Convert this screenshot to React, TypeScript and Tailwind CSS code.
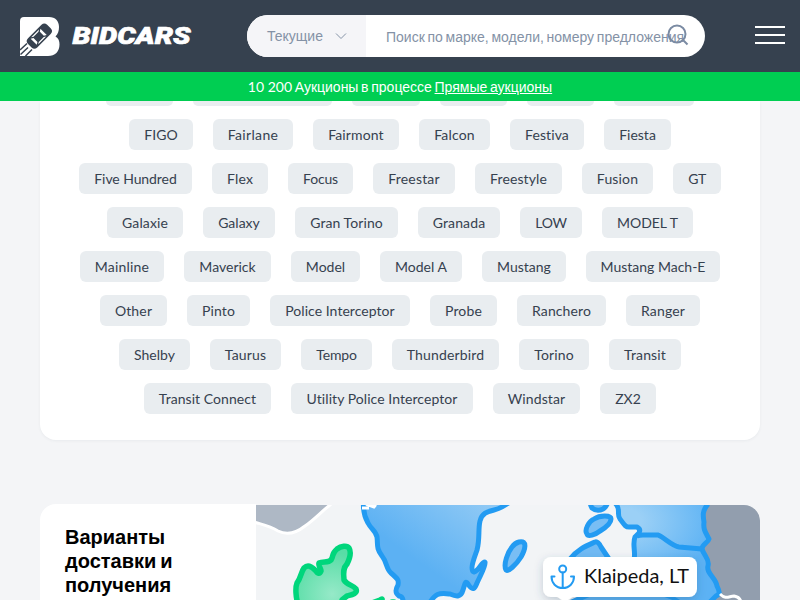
import React from "react";

// name, chip width in px, extra letter spacing in px
type Model = [string, number, number];

const modelRows: Model[][] = [
  [["FIGO", 64, 0], ["Fairlane", 80, 0.35], ["Fairmont", 86, 0.12], ["Falcon", 71, 0.15], ["Festiva", 74, 0.1], ["Fiesta", 67, 0]],
  [["Five Hundred", 113, -0.08], ["Flex", 56, 0.2], ["Focus", 65, -0.15], ["Freestar", 82, 0.2], ["Freestyle", 87, 0.1], ["Fusion", 71, 0.15], ["GT", 48, -0.4]],
  [["Galaxie", 76, 0.12], ["Galaxy", 72, 0], ["Gran Torino", 103, 0.08], ["Granada", 82, 0.12], ["LOW", 62, -0.3], ["MODEL T", 91, 0]],
  [["Mainline", 84, 0.2], ["Maverick", 87, 0], ["Model", 69, 0], ["Model A", 82, 0], ["Mustang", 84, 0], ["Mustang Mach-E", 134, 0]],
  [["Other", 67, 0.15], ["Pinto", 63, 0.15], ["Police Interceptor", 140, 0.05], ["Probe", 67, 0.15], ["Ranchero", 89, 0.1], ["Ranger", 74, 0.15]],
  [["Shelby", 71, 0], ["Taurus", 71, 0.15], ["Tempo", 71, -0.15], ["Thunderbird", 107, 0.15], ["Torino", 70, 0.15], ["Transit", 72, 0.12]],
  [["Transit Connect", 127, 0.06], ["Utility Police Interceptor", 182, 0.06], ["Windstar", 87, 0.12], ["ZX2", 56, 0]],
];

function Logo() {
  return (
    <svg className="mt-[2px] block h-[40px] w-[172px]" viewBox="20 17 172 40">
      <path
        d="M24 17H49C55.5 17 59 21 59 27C59 31 58 34 55.5 36.5C58.5 38 59.5 41 59.5 44.5C59.5 51.500 55 56 48 56H20V21Q20 17 24 17Z"
        fill="#fff"
      />
      <g transform="translate(39 36.500) rotate(-45)">
        <rect x="-13" y="-6.500" width="27" height="13" rx="4" fill="#36414f" />
        <path d="M-7.500 -4.300L-5 -2.800V2.800L-7.500 4.300ZM6.500 -4.500L4 -2.800V2.800L6.500 4.500ZM-6 -5H5L3 -3.700H-4ZM-6 5H5L3 3.700H-4Z" fill="#fff" />
      </g>
      <path d="M20 50L27 43.500M20.500 54.500L28 47.500M25.500 56L32 49.500" stroke="#36414f" strokeWidth="1.500" />
      <text
        x="72.500"
        y="44"
        textLength="118"
        lengthAdjust="spacingAndGlyphs"
        className="fill-white stroke-white font-[Roboto,sans-serif] text-[24.500px] font-black italic"
        strokeWidth="0.700"
      >
        BIDCARS
      </text>
    </svg>
  );
}

function Header() {
  return (
    <header className="flex h-[72px] shrink-0 items-center bg-[#36414f] pr-[15px] pl-5">
      <Logo />
      <div className="ml-[55px] flex h-[42px] w-[458px] overflow-hidden rounded-full bg-white text-[14px] text-[#8492a6]">
        <div className="flex w-[119px] items-center bg-[#f5f5f8] pl-5">
          <span className="w-[56px]">Текущие</span>
          <svg className="ml-3 h-[8px] w-[12px]" viewBox="0 0 12 8" fill="none" stroke="#8492a6">
            <path d="M1 1.500L6 6.500L11 1.500" />
          </svg>
        </div>
        <div className="relative flex flex-1 items-center pt-[2px] pl-5 whitespace-nowrap">
          <span className="[word-spacing:-1.2px]">Поиск по марке, модели, номеру предложения</span>
          <svg className="absolute top-[9px] right-[16px] h-[22px] w-[22px]" viewBox="0 0 22 22" fill="none" stroke="#7b8ba3" strokeWidth="2">
            <circle cx="10" cy="10" r="8.500" />
            <path d="M15.500 15.500L20.500 20.500" />
          </svg>
        </div>
      </div>
      <div className="ml-auto flex w-[30px] flex-col gap-[6px] pb-[2px]">
        <i className="h-[2px] bg-white" />
        <i className="h-[2px] bg-white" />
        <i className="h-[2px] bg-white" />
      </div>
    </header>
  );
}

function Models() {
  return (
    <section className="mx-10 flex h-[339px] shrink-0 flex-col rounded-b-[16px] bg-white font-[Lato,sans-serif] text-[14px] text-[#36414f] shadow-[0_1px_3px_rgba(54,65,79,0.06)]">
      <div className="flex h-[5px] justify-center gap-5">
        <i className="w-[67px] rounded-b-[5px] bg-[#e9edf0]" />
        <i className="w-[139px] rounded-b-[5px] bg-[#e9edf0]" />
        <i className="w-[68px] rounded-b-[5px] bg-[#e9edf0]" />
        <i className="w-[67px] rounded-b-[5px] bg-[#e9edf0]" />
        <i className="w-[67px] rounded-b-[5px] bg-[#e9edf0]" />
        <i className="w-[80px] rounded-b-[5px] bg-[#e9edf0]" />
      </div>
      <div className="mt-[13px] flex flex-col gap-[13px]">
        {modelRows.map((row) => (
          <div key={row[0][0]} className="flex justify-center gap-5">
            {row.map(([name, width, tracking]) => (
              <a
                key={name}
                className="flex h-[31px] items-center justify-center rounded-[6px] bg-[#e9edf0] whitespace-nowrap"
                style={{ width, letterSpacing: tracking }}
              >
                {name}
              </a>
            ))}
          </div>
        ))}
      </div>
    </section>
  );
}

function DeliveryMap() {
  return (
    <svg className="block h-[95px] w-[504px] rounded-tr-[16px]" viewBox="256 505 504 95">
      <defs>
        <linearGradient id="sea" x1="0" y1="1" x2="1" y2="0">
          <stop offset="0.400" stopColor="#5cb1f3" />
          <stop offset="1" stopColor="#98cdf5" />
        </linearGradient>
        <radialGradient id="east" cx="0.350" cy="0.200" r="0.600">
          <stop offset="0.200" stopColor="#9bd0f6" />
          <stop offset="1" stopColor="#5cb2f4" />
        </radialGradient>
        <radialGradient id="isle" cx="0.600" cy="0.800" r="0.700">
          <stop offset="0" stopColor="#96e9c8" />
          <stop offset="1" stopColor="#58dda6" />
        </radialGradient>
        <filter id="lift" x="-20%" y="-40%" width="140%" height="180%">
          <feDropShadow dx="0" dy="3" stdDeviation="4" floodColor="#36506f" floodOpacity="0.250" />
        </filter>
      </defs>
      <rect x="256" y="505" width="504" height="95" fill="#f2f4f6" />
      <path d="M254 500H335L330 505C322 511 315 519 305 526C295 534 286 535 278 531C270 526 264 525 254 522Z" fill="#aeb8c5" stroke="#fff" strokeWidth="3" />

      <g stroke="#00d67c" strokeWidth="5.500" strokeLinejoin="round">
        <path d="M298 604C296 598 295 588 297 583C301 578 301 572 304 568C308 564 312 567 315 570Q319 576 321 571C321 568 318 566 319 563C323 561 328 563 331 560C334 556 331 554 337 549C341 546 347 545 349 548C352 553 349 560 347 564C342 569 344 575 344 580C347 585 353 585 356 589C358 594 351 595 347 596L342 600V606Z" fill="url(#isle)" />
        <path d="M372 603L380 600L382 599M392 602H394" fill="none" strokeLinecap="round" />
      </g>

      <g stroke="#239bf2" strokeWidth="5" strokeLinejoin="round">
        <path d="M363.500 502C363 510 364 516 368 523C371 529 376 531 377 537C378 545 376 548 382 556C387 562 386 569 391 573C398 579 399 580 398 585C395 590 395 593 399 596C403 596 403 600 404 606H428C435 592 440 593 450 594C457 597 461 597 463 590C465 584 465 580 468 584C473 592 475 588 477 583C481 574 486 566 485 562C482 561 479 571 474 572C469 570 475 556 477 550C480 539 478 529 480 521C483 509 494 512 502 507L510 502Z" fill="url(#sea)" />
        <path d="M519 542C528 540 525 550 521 557C516 565 508 572 506 570C503 564 508 552 512 547Q515 543 519 542Z" fill="#79bef4" />
        <path d="M592 508C590 505 590 503 590 500H608C608 504 605 508 603 509Q597 512 592 508Z" fill="#79bef4" />
        <path d="M594 519C600 515 611 515 611 519C611 524 605 528 600 531C595 535 588 537 587 534C584 530 589 521 594 519Z" fill="#79bef4" />
        <path d="M570 559C578 549 586 546 595 542Q598 541 601 547L611 562V585H570Z" fill="#70baf4" />
        <path d="M614 502C622 509 616 514 620 519C624 524 625 527 629 527H637Q641 529 639 533L635 537C632 544 636 552 634 560V575L567 604H710L725 594V500Z" fill="url(#east)" />
      </g>

      <path d="M708 500H765V606H703L718 594L716 583L708 572L709 560L702 549L710 539L704 527L703 514Z" fill="#929eae" />
      <path d="M708 504C702 511 703 516 704 522C703 530 706 533 709 539C708 543 702 544 702 549C704 556 710 559 708 566C706 573 716 578 717 586C720 592 720 594 716 596L708 604" fill="none" stroke="#239bf2" strokeWidth="5" strokeLinejoin="round" />
      <path d="M637 536Q639 535 643 535H658C665 538 672 546 679 547L702 549" fill="none" stroke="#239bf2" strokeWidth="5" />
      <path d="M665 595Q675 598 682 604" fill="none" stroke="#239bf2" strokeWidth="4" />
      <path d="M720 594C726 600 729 596 734 596Q740 597 741 602" fill="none" stroke="#fff" strokeWidth="3" />
      <path d="M362 508L369 508M366 504L374 507Q377 504 373 504" fill="none" stroke="#fff" strokeWidth="3" />

      <g filter="url(#lift)">
        <rect x="543" y="557" width="154" height="40" rx="8" fill="#fff" />
        <path d="M553 594L565 602L574 596Z" fill="#fff" />
      </g>
      <g fill="none" stroke="#239bf2" strokeWidth="2" strokeLinecap="round" strokeLinejoin="round">
        <circle cx="562.700" cy="569" r="3.500" />
        <path d="M562.700 572.500V588M554.500 576.500H551.500C551.500 583 556 588 562.700 588S574 583 574 576.500H571" />
      </g>
      <text x="584" y="583" textLength="105" lengthAdjust="spacingAndGlyphs" className="fill-[#111] font-[Lato,sans-serif] text-[20px]">
        Klaipeda, LT
      </text>
    </svg>
  );
}

export default function App() {
  return (
    <div className="flex h-[600px] w-[800px] flex-col overflow-hidden bg-[#f4f5f7] font-['Liberation_Sans',sans-serif]">
      <Header />
      <div className="flex h-[29px] shrink-0 items-center justify-center bg-[#00ce52] text-[14px] text-white">
        <p className="[word-spacing:-1.2px]">
          <span className="font-[Lato,sans-serif] [word-spacing:0px]">10 200</span> Аукционы в процессе{" "}
          <a className="underline">Прямые аукционы</a>
        </p>
      </div>
      <Models />
      <section className="mx-10 mt-16 flex h-[96px] shrink-0 overflow-hidden rounded-t-[16px]">
        <div className="w-[216px] bg-white pt-[21px] pl-[25px]">
          <h2 className="w-[150px] text-[20px] leading-[24px] font-bold text-black [word-spacing:-1.700px]">Варианты доставки и получения</h2>
        </div>
        <div className="pt-px">
          <DeliveryMap />
        </div>
      </section>
    </div>
  );
}
